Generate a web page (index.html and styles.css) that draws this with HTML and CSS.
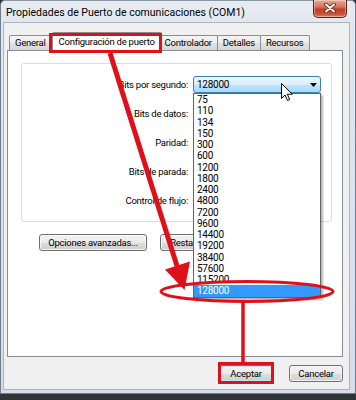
FILE: index.html
```html
<!DOCTYPE html>
<html lang="es">
<head>
<meta charset="utf-8">
<title>Propiedades de Puerto de comunicaciones (COM1)</title>
<link rel="stylesheet" href="styles.css">
</head>
<body>
<div class="screen">
  <div class="window">
    <div class="titlebar">
      <span class="title">Propiedades de Puerto de comunicaciones (COM1)</span>
      <button class="close" aria-label="Cerrar">
        <svg width="12" height="10" viewBox="0 0 12 10" aria-hidden="true">
          <path d="M2 1.5l8 7M10 1.5l-8 7" stroke="#5a1c12" stroke-width="3.6" stroke-linecap="round"/>
          <path d="M2 1.5l8 7M10 1.5l-8 7" stroke="#fff" stroke-width="2" stroke-linecap="round"/>
        </svg>
      </button>
    </div>
    <div class="client">
      <div class="tabs">
        <div class="tab">General</div>
        <div class="tab active">Configuración de puerto</div>
        <div class="tab">Controlador</div>
        <div class="tab">Detalles</div>
        <div class="tab">Recursos</div>
      </div>
      <div class="panel">
        <div class="group">
          <span class="lbl">Bits por segundo:</span>
          <div class="combo open">
            <span>128000</span>
            <svg class="caret" width="7" height="4" viewBox="0 0 7 4" aria-hidden="true"><path d="M0 0h7L3.5 4z"/></svg>
            <ul class="dropdown">
              <li>75</li><li>110</li><li>134</li><li>150</li><li>300</li><li>600</li>
              <li>1200</li><li>1800</li><li>2400</li><li>4800</li><li>7200</li><li>9600</li>
              <li>14400</li><li>19200</li><li>38400</li><li>57600</li><li>115200</li>
              <li class="selected">128000</li>
            </ul>
          </div>
          <span class="lbl">Bits de datos:</span>
          <div class="combo"></div>
          <span class="lbl">Paridad:</span>
          <div class="combo"></div>
          <span class="lbl">Bits de parada:</span>
          <div class="combo"></div>
          <span class="lbl">Control de flujo:</span>
          <div class="combo"></div>
        </div>
        <div class="panel-actions">
          <button class="btn btn-advanced">Opciones avanzadas...</button>
          <button class="btn btn-restore">Restaurar valores predeterminados</button>
        </div>
      </div>
      <div class="dialog-actions">
        <button class="btn btn-dialog btn-default">Aceptar</button>
        <button class="btn btn-dialog">Cancelar</button>
      </div>
    </div>
  </div>
  <svg class="annotations" width="356" height="400" viewBox="0 0 356 400" aria-hidden="true">
    <g fill="none" stroke="#e0101a">
      <rect x="50.5" y="34.5" width="110" height="17" stroke-width="3"/>
      <line x1="110" y1="53" x2="177" y2="266" stroke-width="5"/>
      <ellipse cx="247" cy="291.5" rx="86" ry="10" stroke-width="3"/>
      <line x1="243" y1="301" x2="243" y2="362" stroke-width="3.5"/>
      <rect x="219.5" y="363.5" width="53" height="19" stroke-width="3"/>
    </g>
    <polygon points="184.5,290 165,269.5 190,261.5" fill="#e0101a"/>
    <path d="M281.5 83.5v15l3.5-3.5l2.5 5.5l2.2-1l-2.4-5.3h5z" fill="#fff" stroke="#000" stroke-width="1" stroke-linejoin="round"/>
  </svg>
</div>
</body>
</html>
```
FILE: styles.css
```css
* { box-sizing: border-box; }
html, body { margin: 0; padding: 0; }
body {
  width: 356px;
  height: 400px;
  overflow: hidden;
  background: #2f3337;
  font-family: Roboto, "Liberation Sans", Arial, sans-serif;
  font-size: 9.5px;
  letter-spacing: -0.25px;
  color: #000;
}
.screen { position: relative; width: 356px; height: 400px; }

.window {
  width: 356px;
  height: 394px;
  display: flex;
  flex-direction: column;
  border: 1px solid #6e7d8e;
  border-top-color: #8a97a5;
  border-radius: 5px 5px 0 0;
  padding: 0 5px 3px 2px;
  background: linear-gradient(180deg, #e8ecf1 0, #e1e7ee 24px, #d5dee8 100%);
}
.titlebar {
  flex: none;
  height: 21px;
  display: flex;
  justify-content: space-between;
  align-items: flex-start;
}
.title { padding: 5px 0 0 3px; font-size: 10.5px; letter-spacing: 0; line-height: 13px; white-space: nowrap; }
.close {
  width: 34px;
  height: 18px;
  margin: -1px 3px 0 0;
  padding: 0 0 1px;
  border: 1px solid #5e2218;
  border-top: none;
  border-radius: 0 0 5px 5px;
  background: linear-gradient(180deg, #e9ab99 0%, #d8725c 40%, #c23e28 55%, #cc5438 85%, #df8466 100%);
  box-shadow: inset 0 0 0 1px rgba(255,255,255,.35);
  display: flex;
  align-items: center;
  justify-content: center;
}

.client {
  flex: 1;
  display: flex;
  flex-direction: column;
  background: #f0f0f0;
  border: 1px solid #a9b5c2;
  padding: 9px 6px 7px 3px;
}
.tabs {
  flex: none;
  height: 18px;
  display: flex;
  align-items: flex-end;
  padding-left: 2px;
  position: relative;
  z-index: 1;
}
.tab {
  height: 15px;
  padding: 0 5px;
  line-height: 14px;
  border: 1px solid #898c95;
  border-bottom: none;
  border-radius: 2px 2px 0 0;
  background: linear-gradient(#f4f4f4, #ececec 50%, #e0e0e0 51%, #d8d8d8);
  margin-left: -1px;
  white-space: nowrap;
}
.tab:first-child { margin-left: 0; }
.tab.active {
  position: relative;
  height: 19px;
  margin: 0 -2px -1px 0;
  padding: 0 6px;
  line-height: 17px;
  background: #fff;
  z-index: 2;
}

.panel {
  flex: 1;
  background: #fff;
  border: 1px solid #898c95;
  padding: 12px 10px 0 13px;
}
.group {
  display: grid;
  grid-template-columns: 1fr 128px;
  column-gap: 5px;
  row-gap: 12px;
  border: 1px solid #d5dfe5;
  border-radius: 3px;
  padding: 12px 10px 12px 0;
}
.lbl { text-align: right; line-height: 17px; white-space: nowrap; }
.combo {
  position: relative;
  height: 17px;
  display: flex;
  align-items: center;
  justify-content: space-between;
  padding: 0 3px 0 3px;
  border: 1px solid #707070;
  border-radius: 3px;
  background: linear-gradient(#f2f2f2, #ebebeb 50%, #dddddd 51%, #cfcfcf);
  line-height: 15px;
}
.combo.open {
  border-color: #3c7fb1;
  background: linear-gradient(#eaf6fd, #d9f0fc 50%, #bee6fd 51%, #a7d9f5);
  font-size: 10px;
}
.caret { display: block; fill: #000; }
.dropdown {
  position: absolute;
  top: calc(100% + 1px);
  left: -1px;
  width: 128px;
  margin: 0;
  padding: 0;
  list-style: none;
  background: #fff;
  border: 1px solid #646464;
  box-shadow: 2px 2px 2px rgba(0,0,0,.3);
  z-index: 5;
}
.dropdown li { height: 11.25px; line-height: 11.25px; padding-left: 3px; }
.dropdown li.selected { background: #3399ff; color: #fff; }

.panel-actions {
  display: flex;
  justify-content: flex-end;
  gap: 13px;
  margin-top: 12px;
  padding-right: 12px;
}
.btn {
  height: 17px;
  padding: 0;
  border: 1px solid #707070;
  border-radius: 3px;
  background: linear-gradient(#f2f2f2, #ebebeb 50%, #dddddd 51%, #cfcfcf);
  box-shadow: inset 0 0 0 1px rgba(255,255,255,.7);
  font: inherit;
  letter-spacing: inherit;
  color: #000;
  line-height: 15px;
  white-space: nowrap;
}
.btn-advanced { width: 108px; }
.btn-restore { width: 160px; }
.dialog-actions {
  flex: none;
  display: flex;
  justify-content: flex-end;
  gap: 16px;
  margin-top: 8px;
}
.btn-dialog { width: 54px; }
.btn-default {
  border-color: #3c7fb1;
  box-shadow: inset 0 0 0 1px #bde3f7;
}

.annotations {
  position: absolute;
  left: 0;
  top: 0;
  z-index: 10;
  pointer-events: none;
}
```
